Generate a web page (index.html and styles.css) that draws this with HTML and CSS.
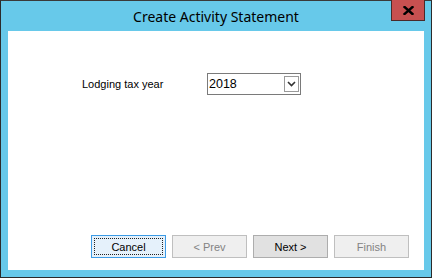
FILE: index.html
```html
<!DOCTYPE html>
<html lang="en">
<head>
  <meta charset="UTF-8" />
  <title>Create Activity Statement</title>
  <link rel="stylesheet" href="styles.css">
</head>
<body>
  <div class="window">
    <div class="titlebar">
      <span class="title">Create Activity Statement</span>
      <button class="close-button" title="Close">
        <svg width="11" height="9" viewBox="0 0 11 9">
          <path d="M1.5 1 L9.5 8 M9.5 1 L1.5 8" stroke="#000" stroke-width="2.4" stroke-linecap="square" />
        </svg>
      </button>
    </div>

    <div class="client">
      <div class="field-row">
        <label class="field-label" for="tax-year">Lodging tax year</label>
        <div class="combo">
          <span class="combo-value" id="tax-year">2018</span>
          <span class="combo-button">
            <svg width="9" height="6" viewBox="0 0 9 6">
              <path d="M1 1 L4.5 4.5 L8 1" fill="none" stroke="#333" stroke-width="1.6" />
            </svg>
          </span>
        </div>
      </div>

      <div class="button-row">
        <button class="wizard-button focused"><span class="focus-rect">Cancel</span></button>
        <button class="wizard-button" disabled>&lt; Prev</button>
        <button class="wizard-button">Next &gt;</button>
        <button class="wizard-button" disabled>Finish</button>
      </div>
    </div>
  </div>
</body>
</html>
```

FILE: styles.css
```css
body {
  margin: 0;
  padding: 0;
  background: #fff;
  font-family: 'Liberation Sans', Arial, sans-serif;
}

.window {
  width: 432px;
  height: 278px;
  box-sizing: border-box;
  border: 1px solid #2b2b2b;
  border-top-color: #3a3a3a;
  background: #67c9ea;
  display: flex;
  flex-direction: column;
}

.titlebar {
  height: 30px;
  display: flex;
  justify-content: center;
  align-items: center;
  position: relative;
}

.title {
  font-family: 'Noto Sans', 'Open Sans', sans-serif;
  font-size: 14px;
  color: #000;
  margin-top: 1px;
}

.close-button {
  position: absolute;
  top: -1px;
  right: 6px;
  width: 34px;
  height: 21px;
  padding: 0;
  box-sizing: border-box;
  border: 1px solid #4a2a2a;
  border-top: none;
  background: #c75050;
  display: flex;
  align-items: center;
  justify-content: center;
}

.client {
  flex: 1;
  margin: 0 7px 7px 7px;
  background: #fff;
  display: flex;
  flex-direction: column;
  justify-content: space-between;
  padding: 42px 15px 12px 74px;
}

.field-row {
  display: flex;
  align-items: center;
}

.field-label {
  width: 125px;
  font-size: 11px;
  color: #000;
}

.combo {
  width: 92px;
  height: 20px;
  border: 1px solid #7a7a7a;
  display: flex;
  align-items: center;
  background: #fff;
}

.combo-value {
  flex: 1;
  font-size: 12.5px;
  padding-left: 1px;
  color: #000;
}

.combo-button {
  width: 15px;
  height: 16px;
  margin-right: 1px;
  box-sizing: border-box;
  border: 1px solid #9a9a9a;
  display: flex;
  align-items: center;
  justify-content: center;
}

.button-row {
  display: flex;
  justify-content: flex-end;
  gap: 6px;
}

.wizard-button {
  flex: 0 0 75px;
  height: 23px;
  padding: 0;
  box-sizing: border-box;
  border: 1px solid #adadad;
  background: #e1e1e1;
  font-family: 'Liberation Sans', Arial, sans-serif;
  font-size: 11px;
  color: #000;
  display: flex;
  align-items: center;
  justify-content: center;
}

.wizard-button:disabled {
  border-color: #bfbfbf;
  background: #efefef;
  color: #838383;
}

.wizard-button.focused {
  border-color: #3c9be6;
  background: #e5f1fb;
  padding: 2px;
}

.focus-rect {
  width: 100%;
  height: 100%;
  box-sizing: border-box;
  border: 1px dotted #222;
  display: flex;
  align-items: center;
  justify-content: center;
}
```
